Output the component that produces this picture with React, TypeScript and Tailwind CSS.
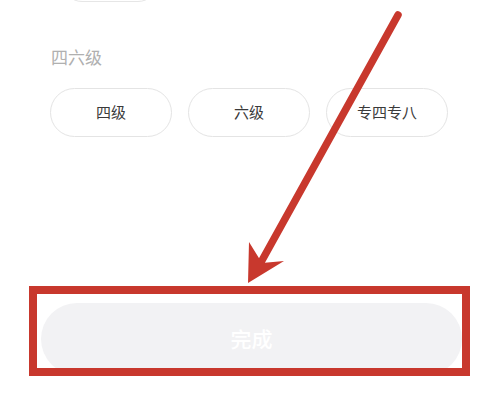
import React from "react";

const levels = ["四级", "六级", "专四专八"];

const App = () => {
  return (
    <div
      className="relative w-[499px] h-[400px] bg-white overflow-hidden"
      style={{ fontFamily: '"Noto Sans CJK SC", "Noto Sans", sans-serif' }}
    >
      <div className="ml-[62px] -mt-[38px] w-[96px] h-[40px] rounded-full border border-[#e6e6e6]" />

      <p className="mt-[43px] ml-[51px] text-[17px] leading-[24px] text-[#b0b0b0]">
        四六级
      </p>

      <div className="mt-[19px] ml-[50px] flex gap-[16px]">
        {levels.map((l) => (
          <div
            key={l}
            className="w-[122px] h-[49px] shrink-0 rounded-full border border-[#e4e4e4] flex items-center justify-center text-[15px] text-[#3a3a3a]"
          >
            {l}
          </div>
        ))}
      </div>

      <button className="mt-[166px] ml-[41px] w-[421px] h-[72px] rounded-full bg-[#f2f2f4] flex items-start justify-center pt-[21px] text-[21px] leading-[28px] font-medium text-white">
        完成
      </button>

      {/* annotation overlay */}
      <div className="absolute left-[29px] top-[286px] w-[441px] h-[90px] border-[8px] border-[#c8382d]" />
      <svg className="absolute inset-0" width="499" height="400" viewBox="0 0 499 400">
        <line x1="398" y1="15" x2="260" y2="264" stroke="#c8382d" strokeWidth="7.5" strokeLinecap="round" />
        <polygon points="248,283 249,242 262,263 284,261" fill="#c8382d" />
      </svg>
    </div>
  );
};

export default App;
